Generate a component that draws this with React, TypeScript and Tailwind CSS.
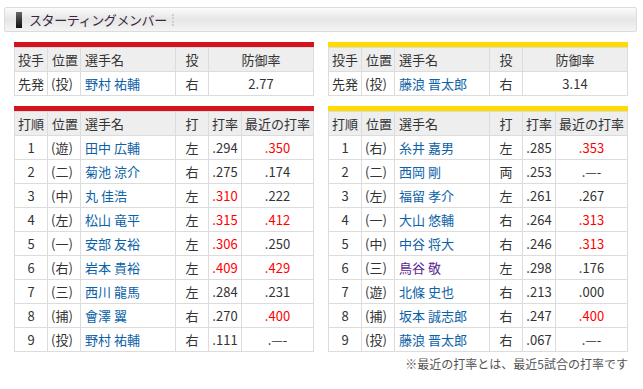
import React from "react";

type Row = { o: string; p: string; n: string; b: string; a: string; aR?: boolean; r: string; rR?: boolean; purple?: boolean };

const NA = ".—-";

const carp: Row[] = [
  { o: "1", p: "(遊)", n: "田中 広輔", b: "左", a: ".294", r: ".350", rR: true },
  { o: "2", p: "(二)", n: "菊池 涼介", b: "右", a: ".275", r: ".174" },
  { o: "3", p: "(中)", n: "丸 佳浩", b: "左", a: ".310", aR: true, r: ".222" },
  { o: "4", p: "(左)", n: "松山 竜平", b: "左", a: ".315", aR: true, r: ".412", rR: true },
  { o: "5", p: "(一)", n: "安部 友裕", b: "左", a: ".306", aR: true, r: ".250" },
  { o: "6", p: "(右)", n: "岩本 貴裕", b: "左", a: ".409", aR: true, r: ".429", rR: true },
  { o: "7", p: "(三)", n: "西川 龍馬", b: "左", a: ".284", r: ".231" },
  { o: "8", p: "(捕)", n: "會澤 翼", b: "右", a: ".270", r: ".400", rR: true },
  { o: "9", p: "(投)", n: "野村 祐輔", b: "右", a: ".111", r: NA },
];

const tigers: Row[] = [
  { o: "1", p: "(右)", n: "糸井 嘉男", b: "左", a: ".285", r: ".353", rR: true },
  { o: "2", p: "(二)", n: "西岡 剛", b: "両", a: ".253", r: NA },
  { o: "3", p: "(左)", n: "福留 孝介", b: "左", a: ".261", r: ".267" },
  { o: "4", p: "(一)", n: "大山 悠輔", b: "右", a: ".264", r: ".313", rR: true },
  { o: "5", p: "(中)", n: "中谷 将大", b: "右", a: ".246", r: ".313", rR: true },
  { o: "6", p: "(三)", n: "鳥谷 敬", b: "左", a: ".298", r: ".176", purple: true },
  { o: "7", p: "(遊)", n: "北條 史也", b: "右", a: ".213", r: ".000" },
  { o: "8", p: "(捕)", n: "坂本 誠志郎", b: "右", a: ".247", r: ".400", rR: true },
  { o: "9", p: "(投)", n: "藤浪 晋太郎", b: "右", a: ".067", r: NA },
];

const hd = "bg-[#eeeeee] h-[23px] flex items-center";
const cell = "bg-white h-[23px] flex items-center";

function PitcherTable({ bar, name, era }: { bar: string; name: string; era: string }) {
  return (
    <div className="w-[300px]">
      <div className={`h-[5px] ${bar}`} />
      <div className="grid grid-cols-[32px_32px_94px_32px_104px] gap-px bg-[#dcdcdc] border border-[#dcdcdc]">
        <div className={`${hd} justify-center`}>投手</div>
        <div className={`${hd} pl-[4px]`}>位置</div>
        <div className={`${hd} pl-[4px]`}>選手名</div>
        <div className={`${hd} justify-center`}>投</div>
        <div className={`${hd} justify-center`}>防御率</div>
        <div className={`${cell} justify-center`}>先発</div>
        <div className={`${cell} pl-[3px]`}>(投)</div>
        <div className={`${cell} pl-[4px] text-[#0b62a6]`}>{name}</div>
        <div className={`${cell} justify-center`}>右</div>
        <div className={`${cell} justify-center`}>{era}</div>
      </div>
    </div>
  );
}

function Lineup({ bar, rows }: { bar: string; rows: Row[] }) {
  return (
    <div className="w-[300px]">
      <div className={`h-[5px] ${bar}`} />
      <div className="grid grid-cols-[32px_32px_94px_32px_32px_71px] gap-px bg-[#dcdcdc] border border-[#dcdcdc]">
        <div className={`${hd} justify-center`}>打順</div>
        <div className={`${hd} pl-[4px]`}>位置</div>
        <div className={`${hd} pl-[4px]`}>選手名</div>
        <div className={`${hd} justify-center`}>打</div>
        <div className={`${hd} justify-center`}>打率</div>
        <div className={`${hd} justify-center`}>最近の打率</div>
        {rows.map((r) => (
          <React.Fragment key={r.o}>
            <div className={`${cell} justify-center`}>{r.o}</div>
            <div className={`${cell} pl-[3px]`}>{r.p}</div>
            <div className={`${cell} pl-[4px] ${r.purple ? "text-[#5a1f96]" : "text-[#0b62a6]"}`}>{r.n}</div>
            <div className={`${cell} justify-center`}>{r.b}</div>
            <div className={`${cell} justify-center ${r.aR ? "text-[#ff0000]" : ""}`}>{r.a}</div>
            <div className={`${cell} justify-center ${r.rR ? "text-[#ff0000]" : ""}`}>{r.r}</div>
          </React.Fragment>
        ))}
      </div>
    </div>
  );
}

export default function App() {
  return (
    <div
      className="w-[643px] h-[389px] bg-white text-[#333333] text-[13px] leading-none overflow-hidden"
      style={{ fontFamily: '"Noto Sans CJK JP", "Noto Sans", sans-serif' }}
    >
      <div className="pt-[7px] pl-[4px] pr-[6px]">
        <div className="h-[25px] border border-[#dcdcdc] rounded-[2px] bg-gradient-to-b from-[#fbfbfb] via-[#e6e6e6] to-[#f4f4f4] flex items-center pl-[11px]">
          <div className="w-[6px] h-[16px] bg-gradient-to-b from-[#666666] to-[#111111]" />
          <div className="ml-[7px] text-[13px] text-[#3a2640] tracking-[-0.4px]">スターティングメンバー</div>
          <div className="ml-[5px] h-[12px] border-l-2 border-dotted border-[#cfcfcf]" />
        </div>
      </div>
      <div className="flex gap-[14px] pl-[14px] mt-[10px]">
        <PitcherTable bar="bg-[#d5121d]" name="野村 祐輔" era="2.77" />
        <PitcherTable bar="bg-[#ffdb00]" name="藤浪 晋太郎" era="3.14" />
      </div>
      <div className="flex gap-[14px] pl-[14px] mt-[10px]">
        <Lineup bar="bg-[#d5121d]" rows={carp} />
        <Lineup bar="bg-[#ffdb00]" rows={tigers} />
      </div>
      <div className="w-[628px] text-right text-[12px] text-[#555555] mt-[6px]">
        ※最近の打率とは、最近5試合の打率です
      </div>
    </div>
  );
}
